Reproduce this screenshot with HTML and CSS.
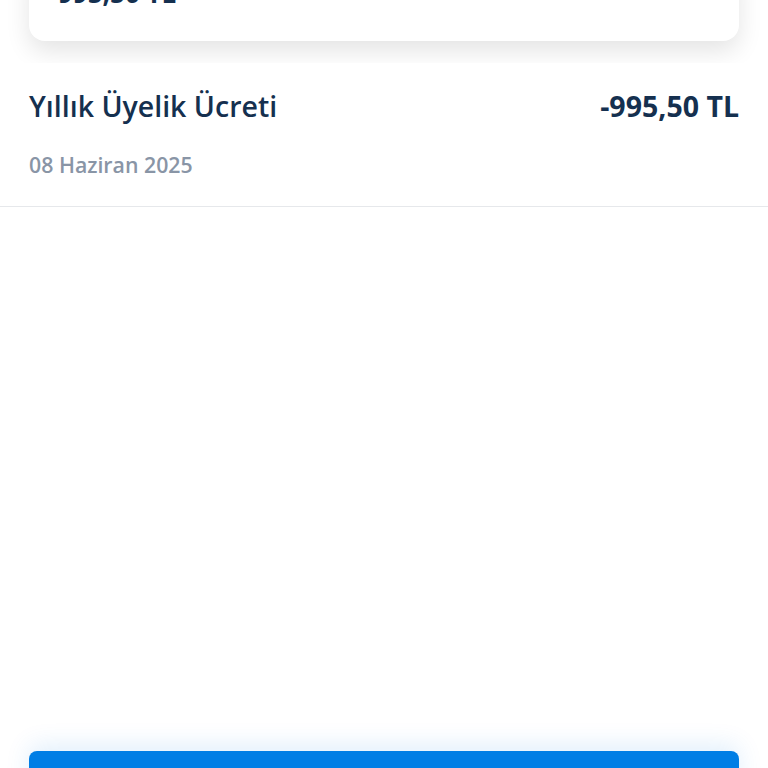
FILE: index.html
```html
<!DOCTYPE html>
<html lang="tr">
<head>
  <meta charset="UTF-8" />
  <meta name="viewport" content="width=device-width, initial-scale=1.0"/>
  <title>İşlem Detayı</title>
  <link rel="stylesheet" href="styles.css">
</head>
<body>
  <div class="summary">
    <div class="summary-card">
      <div class="summary-amount">995,50 TL</div>
    </div>
  </div>

  <div class="txn">
    <div class="txn-top">
      <span class="txn-title">Yıllık Üyelik Ücreti</span>
      <span class="txn-amount">-995,50 TL</span>
    </div>
    <div class="txn-date">08 Haziran 2025</div>
  </div>

  <div class="footer">
    <button class="primary"></button>
  </div>
</body>
</html>
```
FILE: styles.css
```css
html, body { margin: 0; height: 100%; }
body { font-family: "Open Sans", "Noto Sans", sans-serif; background: #fff; color: #15304f; overflow: hidden; position: relative; }

.summary { height: 63px; overflow: hidden; padding: 0 29px; }
.summary-card { margin-top: -40px; height: 81px; background: #fff; border-radius: 16px; box-shadow: 0 10px 24px rgba(0,0,0,0.11); padding: 0 29px; box-sizing: border-box; }
.summary-amount { font-size: 26px; font-weight: 700; line-height: 1; padding-top: 20px; }

.txn { padding: 24px 29px 0; height: 144px; box-sizing: border-box; border-bottom: 1px solid #e6e8eb; }
.txn-top { display: flex; justify-content: space-between; align-items: baseline; }
.txn-title { font-size: 28.5px; font-weight: 600; }
.txn-amount { font-size: 28.5px; font-weight: 700; }
.txn-date { margin-top: 25px; font-size: 21.3px; font-weight: 600; color: #8995a6; }

.footer { position: absolute; left: 0; right: 0; bottom: 0; height: 17px; padding: 0 29px; }
.primary { display: block; width: 100%; height: 60px; border: 0; border-radius: 8px; background: #007ee5; box-shadow: 0 -6px 24px rgba(0,126,229,0.12); }
```
